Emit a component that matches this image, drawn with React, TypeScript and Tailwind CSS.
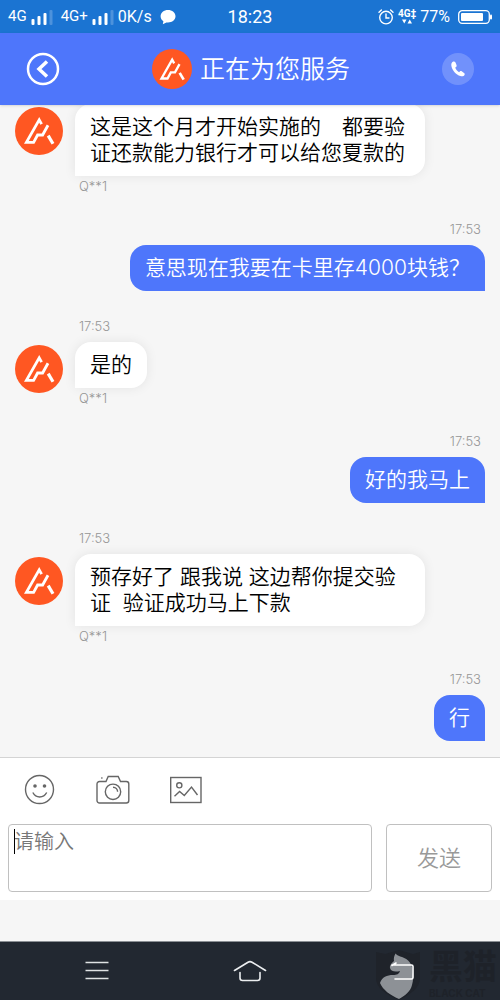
import React, { useState } from "react";

type Message = {
  id: number;
  from: "agent" | "me";
  text: string;
  time?: string;
  name?: string;
};

const messages: Message[] = [
  {
    id: 1,
    from: "agent",
    text: "这是这个月才开始实施的\u3000都要验证还款能力银行才可以给您夏款的",
    name: "Q**1",
  },
  { id: 2, from: "me", text: "意思现在我要在卡里存4000块钱？", time: "17:53" },
  { id: 3, from: "agent", text: "是的", time: "17:53", name: "Q**1" },
  { id: 4, from: "me", text: "好的我马上", time: "17:53" },
  {
    id: 5,
    from: "agent",
    text: "预存好了 跟我说 这边帮你提交验证  验证成功马上下款",
    time: "17:53",
    name: "Q**1",
  },
  { id: 6, from: "me", text: "行", time: "17:53" },
];

function Logo({ className }: { className: string }) {
  return (
    <svg viewBox="0 0 48 48" className={className} aria-hidden="true">
      <circle cx="24" cy="24" r="24" fill="#ff5722" />
      <g fill="none" stroke="#fff" strokeWidth="2.8">
        <path d="M26.600 17.200 24.200 12.800 11.400 35.400H18.600L22.600 28H27.600L33 18.200" strokeLinejoin="miter" />
        <path d="M33.200 28.600 38 36.800" strokeWidth="3.200" />
      </g>
    </svg>
  );
}

function SignalBars() {
  return (
    <svg viewBox="0 0 22 16" className="h-4 w-[22px]" aria-hidden="true">
      <g fill="#fff">
        <rect x="0.5" y="10" width="3" height="6" rx="1" />
        <rect x="6.5" y="7" width="3" height="9" rx="1" />
        <rect x="12.5" y="4" width="3" height="12" rx="1" />
        <rect x="18.5" y="1" width="3" height="15" rx="1" opacity="0.22" />
      </g>
    </svg>
  );
}

function StatusBar() {
  return (
    <div className="flex h-[33px] shrink-0 items-center bg-[#1b74d2] px-2 font-['Roboto','Noto_Sans_CJK_SC',sans-serif] text-[15px] font-normal text-white">
      <div className="flex flex-1 items-center gap-1">
        <span>4G</span>
        <SignalBars />
        <span className="ml-1">4G+</span>
        <SignalBars />
        <span className="text-base">0K/s</span>
        <svg viewBox="0 0 16 16" className="ml-1 size-4" fill="#fff" aria-hidden="true">
          <path d="M8 1C3.800 1 .6 3.700.6 7.300c0 2.100 1.100 3.900 2.800 5L2.800 15.300l3.600-1.900c.5.100 1.100.1 1.600.1 4.200 0 7.500-2.600 7.500-6.200S12.200 1 8 1z" />
        </svg>
      </div>
      <span className="text-[18px]">18:23</span>
      <div className="flex flex-1 items-center justify-end gap-1">
        <svg
          viewBox="0 0 16 16"
          className="size-4"
          fill="none"
          stroke="#fff"
          strokeWidth="1.4"
          strokeLinecap="round"
          aria-hidden="true"
        >
          <circle cx="8" cy="8.600" r="6.300" />
          <path d="M8 5v4h3M1 3.200 3.400 1M15 3.200 12.600 1" />
        </svg>
        <span className="flex flex-col items-center text-[10px] leading-[10px] font-bold">
          4G‡
          <svg viewBox="0 0 10 5" className="h-[5px] w-[10px]" fill="#fff" aria-hidden="true">
            <path d="M0 0.500h4.500L2.250 4.500zM5.500 4.500H10L7.750.5z" />
          </svg>
        </span>
        <span className="text-base">77%</span>
        <svg viewBox="0 0 34 16" className="ml-1 h-4 w-[34px]" aria-hidden="true">
          <rect x="0.700" y="1.700" width="30.600" height="12.600" rx="3.500" fill="none" stroke="#fff" strokeWidth="1.300" />
          <rect x="3" y="4" width="22" height="8" rx="1" fill="#fff" />
          <rect x="32" y="5.500" width="2" height="5" rx="1" fill="#fff" />
        </svg>
      </div>
    </div>
  );
}

function Header() {
  return (
    <header className="z-10 flex h-[72px] shrink-0 items-center justify-between bg-[#4e76fb] px-[26px] shadow-sm">
      <button type="button" aria-label="返回">
        <svg viewBox="0 0 34 34" className="size-[34px]" fill="none" stroke="#fff" aria-hidden="true">
          <circle cx="17" cy="17" r="15" strokeWidth="2.500" />
          <path d="M21 9.500 13 17l8 7.500" strokeWidth="3.500" />
        </svg>
      </button>
      <div className="flex items-center gap-2">
        <Logo className="size-10" />
        <h1 className="text-[25px] leading-9 text-white">正在为您服务</h1>
      </div>
      <button
        type="button"
        aria-label="电话"
        className="flex size-8 items-center justify-center rounded-full bg-white/20"
      >
        <svg viewBox="0 0 16 16" className="size-4" fill="#fff" aria-hidden="true">
          <path d="M3.200.6C1.600 1.400 1 3 1.400 4.900c.9 4.400 4.600 8.600 9 10.200 1.800.6 3.600.1 4.200-1.400.3-.7 0-1.400-.6-1.800l-2.300-1.600c-.6-.4-1.400-.3-1.900.2l-.7.800C7.300 10.200 5.900 8.500 5.200 6.600l.9-.6c.5-.4.7-1.100.5-1.700L5.500 1.500C5.100.6 4.100.2 3.200.6z" />
        </svg>
      </button>
    </header>
  );
}

function AgentMessage({ message }: { message: Message }) {
  return (
    <div className="flex items-start gap-3">
      <Logo className={message.time ? "mt-[27px] size-12 shrink-0" : "mt-[3px] size-12 shrink-0"} />
      <div className="flex min-w-0 flex-col items-start">
        {message.time && (
          <time className="mb-2 pl-1 text-[13px] leading-4 text-[#959595]">{message.time}</time>
        )}
        <p className="max-w-[350px] rounded-2xl rounded-bl-none bg-white px-[15px] py-[10px] text-[21px] leading-[26px] whitespace-pre-wrap text-black shadow-[0_0_12px_rgba(0,0,0,0.08)]">
          {message.text}
        </p>
        <span className="mt-[2px] pl-1 text-[13px] leading-4 text-[#959595]">{message.name}</span>
      </div>
    </div>
  );
}

function MyMessage({ message }: { message: Message }) {
  return (
    <div className="flex flex-col items-end">
      <time className="mb-2 pr-1 text-[13px] leading-4 text-[#959595]">{message.time}</time>
      <p className="rounded-2xl rounded-br-none bg-[#4e76fb] px-[15px] py-[10px] text-[21px] leading-[26px] text-white">
        {message.text}
      </p>
    </div>
  );
}

function Composer() {
  const [draft, setDraft] = useState("");

  return (
    <form
      className="shrink-0 border-t border-[#d4d4d4] bg-white px-2 pb-2"
      onSubmit={(e) => e.preventDefault()}
    >
      <div className="mb-[2px] flex h-16 items-center gap-10 px-4 text-[#666]">
        <button type="button" aria-label="表情">
          <svg viewBox="0 0 32 32" className="size-8" fill="none" stroke="currentColor" strokeWidth="1.400" aria-hidden="true">
            <circle cx="15.500" cy="15.500" r="14" />
            <circle cx="11" cy="12" r="1.800" fill="currentColor" stroke="none" />
            <circle cx="20.500" cy="12" r="1.800" fill="currentColor" stroke="none" />
            <path d="M8.800 18.500c1.600 3 4 4.500 6.900 4.500s5.400-1.500 7-4.500" />
          </svg>
        </button>
        <button type="button" aria-label="拍照">
          <svg viewBox="0 0 34 32" className="h-8 w-[34px]" fill="none" stroke="currentColor" strokeWidth="1.400" aria-hidden="true">
            <path d="M3.500 7.500h6.500l2.200-5h10l2.300 5h5.800a2.500 2.500 0 0 1 2.500 2.500v16.500a2.500 2.500 0 0 1-2.500 2.500H3.500A2.500 2.500 0 0 1 1 26.500V10a2.500 2.500 0 0 1 2.500-2.500z" />
            <circle cx="17" cy="17.800" r="7.700" />
            <path d="M17 13.300c2.600 0 4.600 2 4.600 4.500M5.200 4h1.300" />
          </svg>
        </button>
        <button type="button" aria-label="图片">
          <svg viewBox="0 0 32 32" className="size-8" fill="none" stroke="currentColor" strokeWidth="1.400" aria-hidden="true">
            <rect x="0.700" y="3.500" width="30.300" height="25" />
            <circle cx="9.300" cy="11.300" r="2.600" />
            <path d="M4.500 22.200 9.600 17.400 14.300 21.500 21.500 13 27.500 21" />
          </svg>
        </button>
      </div>
      <div className="flex gap-[14px]">
        <div className="relative flex flex-1">
          <textarea
            aria-label="请输入"
            value={draft}
            onChange={(e) => setDraft(e.target.value)}
            placeholder="请输入"
            className="h-[68px] w-full resize-none rounded border border-[#c0c0c0] px-[5px] py-1 text-xl leading-[26px] outline-none placeholder:text-[#777]"
          />
          {/* text cursor */}
          <span className="absolute top-[5px] left-[6px] h-[25px] w-px bg-black" />
        </div>
        <button
          type="submit"
          className="w-[106px] rounded border border-[#c0c0c0] text-[22px] text-[#999]"
        >
          发送
        </button>
      </div>
    </form>
  );
}

function NavBar() {
  return (
    <nav className="relative grid h-[59px] shrink-0 grid-cols-3 overflow-hidden border-t border-[#8b8f94] bg-[#222831] px-5">
      {/* watermark */}
      <div className="absolute top-2 left-3/4 flex gap-[6px]">
        <svg viewBox="0 0 48 50" className="h-[50px] w-12" aria-hidden="true">
          <path d="M1 2 10 4 24 0 38 4 45 2V28C45 38 36 44 24 50 10 44 1 38 1 28z" fill="#1f232a" />
          <path
            d="M20.500 3.500c2 2.500 4 2.500 6.500 3.500 6 2 11 7 10.500 15 .5 4 1 8-.5 13-1.500 6-6 10-13 14C15 45 8 40 5 33c2-6 7-8 13-8 4 0 6-1 7-4-4 1-9 1-10-3-.5-3 2-5 4-7-.5-2.500 0-5 1.500-7.500z"
            fill="#8d9196"
          />
        </svg>
        <div className="font-bold whitespace-nowrap text-[#1e2229]">
          <div className="text-[34px] leading-[34px]">黑猫</div>
          <div className="text-[10px] leading-[18px]">BLACK CAT</div>
        </div>
      </div>
      <button type="button" aria-label="菜单" className="flex items-center justify-center">
        <svg viewBox="0 0 24 20" className="h-5 w-6" stroke="#dfe2e4" strokeWidth="1.600" aria-hidden="true">
          <path d="M0.500 1.500h23M0.500 9.500h23M0.500 17.500h23" />
        </svg>
      </button>
      <button type="button" aria-label="主页" className="flex items-center justify-center">
        <svg viewBox="0 0 34 22" className="h-[22px] w-[34px]" fill="none" stroke="#eceef0" strokeWidth="1.600" strokeLinecap="round" aria-hidden="true">
          <path d="M1.500 10.500 15 2.200q2-1.200 4 0L32.500 10.500M7 12.500V18q0 2.500 2.500 2.500h15Q27 20.500 27 18v-5.500" />
        </svg>
      </button>
      <button type="button" aria-label="返回" className="relative flex items-center justify-center">
        <svg viewBox="0 0 24 18" className="h-[18px] w-6" fill="none" stroke="#fff" strokeWidth="1.600" strokeLinecap="round" aria-hidden="true">
          <path d="M5 1 1 3.500M1 3h19.500Q22 3 22 4.500v11q0 1.500-1.500 1.500H4" />
        </svg>
      </button>
    </nav>
  );
}

export default function App() {
  return (
    <div className="flex h-screen flex-col bg-[#f6f6f6] font-['Inter','Noto_Sans_CJK_SC',sans-serif] font-[350]">
      <StatusBar />
      <Header />
      <main className="flex min-h-0 flex-1 flex-col justify-end gap-[27px] overflow-hidden px-[15px] pb-4">
        {messages.map((message) =>
          message.from === "agent" ? (
            <AgentMessage key={message.id} message={message} />
          ) : (
            <MyMessage key={message.id} message={message} />
          )
        )}
      </main>
      <Composer />
      <div className="h-[41px] shrink-0" />
      <NavBar />
    </div>
  );
}
